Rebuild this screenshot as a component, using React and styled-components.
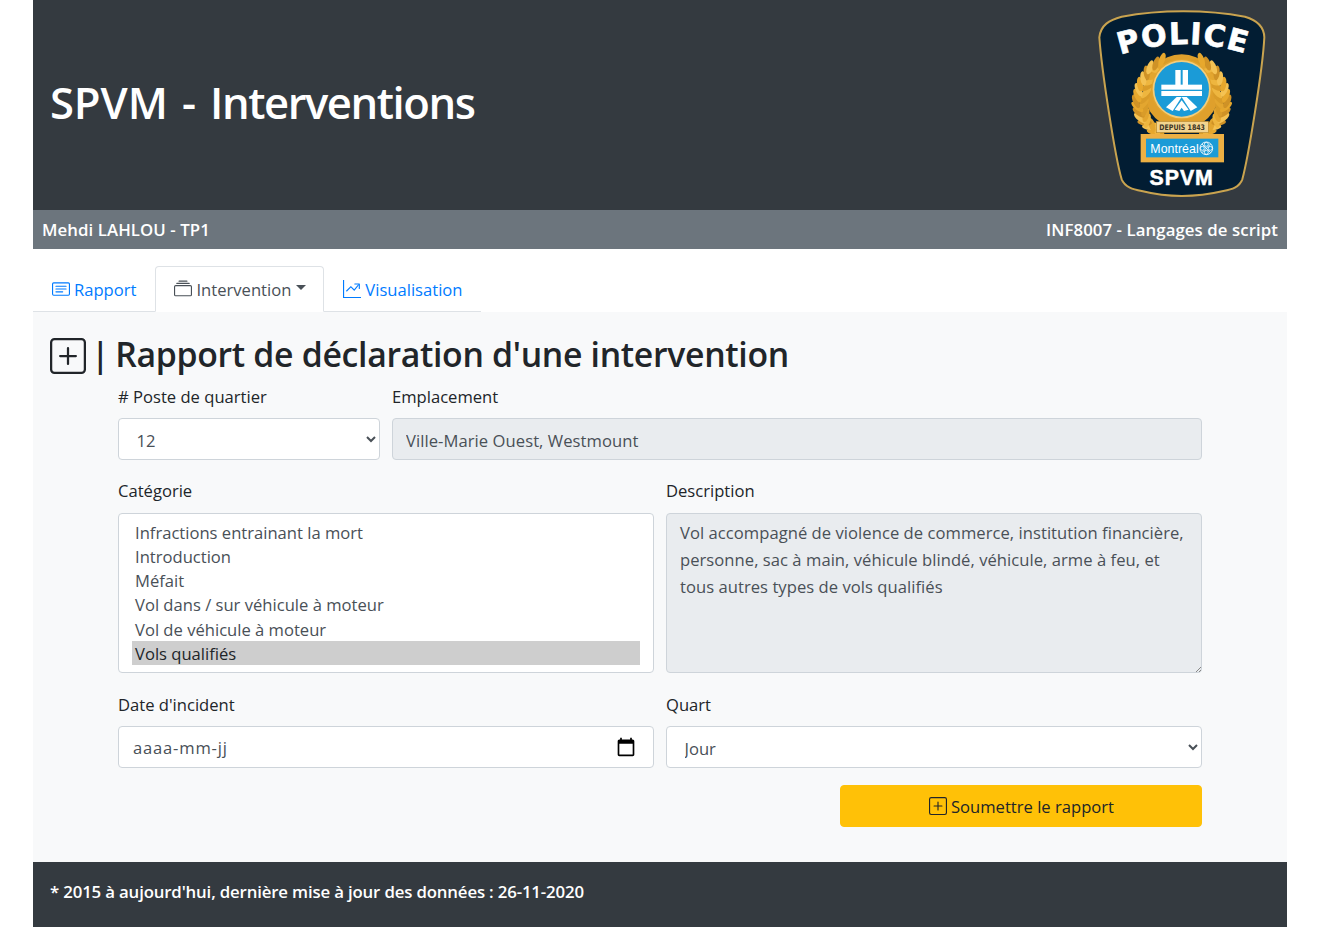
import React from "react";
import styled, { createGlobalStyle } from "styled-components";

const Global = createGlobalStyle`
  html, body { margin: 0; padding: 0; background: #fff; }
  body { font-family: "Open Sans", "Noto Sans", sans-serif; font-size: 16.6px; color: #212529; }
  * { box-sizing: border-box; }
`;

const Page = styled.div`width: 1254px; margin: 0 auto;`;
const Header = styled.header`
  height: 210px; background: #343a40; color: #fff;
  display: flex; align-items: center; justify-content: space-between; padding-left: 17px;
`;
const Title = styled.h1`
  margin: 0 0 6px; font-size: 43.6px; font-weight: 600; line-height: 1.2; word-spacing: 3px; letter-spacing: -0.1px;
`;
const TitleWord = styled.span`letter-spacing: -1.45px;`;
const SubBar = styled.div`
  height: 39px; background: #6c757d; color: #fff; display: flex; align-items: center;
  justify-content: space-between; padding: 0 9px; font-weight: 600; font-size: 16.8px; letter-spacing: 0.08px;
`;
const Tabs = styled.nav`
  display: flex; width: 448px; height: 63px; padding-top: 17px; border-bottom: 1px solid #dee2e6;
`;
const Tab = styled.a`
  display: flex; align-items: center; gap: 4px; height: 46px; margin-bottom: -1px;
  padding: ${p => (p.$active ? "0 17px 0 18px" : "0 18px")};
  color: ${p => (p.$active ? "#495057" : "#007bff")};
  background: ${p => (p.$active ? "#fff" : "transparent")};
  border: 1px solid ${p => (p.$active ? "#dee2e6" : "transparent")};
  border-bottom-color: ${p => (p.$active ? "#fff" : "transparent")};
  border-radius: 4px 4px 0 0;
`;
const Caret = styled.span`
  width: 0; height: 0; margin-left: 1px; margin-top: -3px;
  border-top: 5px solid #495057; border-left: 5.5px solid transparent; border-right: 5.5px solid transparent;
`;
const Main = styled.main`background: #f8f9fa; height: 550px; padding: 26px 17px 0;`;
const Heading = styled.h2`
  margin: 0; display: flex; align-items: center; height: 36px; font-size: 33.8px; font-weight: 600; line-height: 36px; letter-spacing: -0.32px;
`;
const HeadingBar = styled.span`margin: 0 6px 4px 5px;`;
const HeadingText = styled.span`margin-bottom: 4px;`;
const Form = styled.form`margin: 10.75px 0 0 68px; width: 1084px;`;
const Row = styled.div`
  display: grid; grid-template-columns: ${p => p.$cols || "1fr 1fr"}; column-gap: 12px; margin-bottom: ${p => p.$mb || "19.5px"};
`;
const Field = styled.div`display: flex; flex-direction: column; min-width: 0;`;
const Label = styled.label`display: block; height: 24px; line-height: 23px; margin-bottom: 9.5px; white-space: nowrap;`;
const controlBase = `
  width: 100%; height: 42px; border: 1px solid #ced4da; border-radius: 4px; color: #495057;
  font-family: inherit; font-size: inherit; outline: none;
`;
const Select = styled.select`${controlBase} background: #fff; padding: 2px 12px 0 13.5px;`;
const TextInput = styled.input`
  ${controlBase} background: ${p => (p.readOnly ? "#e9ecef" : "#fff")}; padding: 2px 13px 0; letter-spacing: 0.06px;
`;
const ListBox = styled.select`
  ${controlBase} height: 160px; background: #fff; padding: 6px 13px; overflow: hidden;
  option { padding: 1px 3px 0; height: 24.2px; line-height: 23.2px; min-height: 24.2px; }
  option:checked { background: #cecece linear-gradient(#cecece, #cecece); color: #212529; }
`;
const TextArea = styled.textarea`
  ${controlBase} height: 160px; background: #e9ecef; padding: 6.6px 13px; line-height: 26.6px; letter-spacing: 0.04px;
  resize: vertical; overflow: hidden; display: block;
  &::-webkit-resizer {
    background: linear-gradient(135deg, transparent 80%, #888 80%, #888 85%, transparent 85%, transparent 90%, #888 90%, #888 95%, transparent 95%);
  }
`;
const DateBox = styled.div`
  ${controlBase} background: #fff; display: flex; align-items: center; justify-content: space-between;
  padding: 0 17px 0 14px; letter-spacing: .8px;
`;
const Actions = styled.div`display: flex; justify-content: flex-end; margin-top: -2.5px;`;
const Submit = styled.button`
  width: 362px; height: 42px; background: #ffc107; border: 1px solid #ffc107; border-radius: 4px; padding: 0 0 0 1px;
  color: #212529; font-family: inherit; font-size: inherit; display: flex; align-items: center; justify-content: center; gap: 4px;
`;
const Footer = styled.footer`
  height: 65px; background: #343a40; color: #fff; display: flex; align-items: center; padding: 0 0 7px 17px;
  font-weight: 600; font-size: 16.8px; letter-spacing: -0.15px;
`;

const Bi = ({ size = 18, children }) => (
  <svg width={size} height={size} viewBox="0 0 16 16" fill="currentColor" style={{ flex: "none" }}>{children}</svg>
);
const PlusSquare = ({ size }) => (
  <Bi size={size}>
    <path fillRule="evenodd" d="M14 1a1 1 0 0 1 1 1v12a1 1 0 0 1-1 1H2a1 1 0 0 1-1-1V2a1 1 0 0 1 1-1h12zM2 0a2 2 0 0 0-2 2v12a2 2 0 0 0 2 2h12a2 2 0 0 0 2-2V2a2 2 0 0 0-2-2H2z" />
    <path d="M8 4a.5.5 0 0 1 .5.5v3h3a.5.5 0 0 1 0 1h-3v3a.5.5 0 0 1-1 0v-3h-3a.5.5 0 0 1 0-1h3v-3A.5.5 0 0 1 8 4z" />
  </Bi>
);
const CardText = () => (
  <Bi>
    <path fillRule="evenodd" d="M14.5 3a.5.5 0 0 1 .5.5v9a.5.5 0 0 1-.5.5h-13a.5.5 0 0 1-.5-.5v-9a.5.5 0 0 1 .5-.5h13zm-13-1A1.5 1.5 0 0 0 0 3.5v9A1.5 1.5 0 0 0 1.5 14h13a1.5 1.5 0 0 0 1.5-1.5v-9A1.5 1.5 0 0 0 14.5 2h-13z" />
    <path d="M3 5.5a.5.5 0 0 1 .5-.5h9a.5.5 0 0 1 0 1h-9a.5.5 0 0 1-.5-.5zM3 8a.5.5 0 0 1 .5-.5h9a.5.5 0 0 1 0 1h-9A.5.5 0 0 1 3 8zm0 2.5a.5.5 0 0 1 .5-.5h6a.5.5 0 0 1 0 1h-6a.5.5 0 0 1-.5-.5z" />
  </Bi>
);
const Collection = () => (
  <Bi>
    <path fillRule="evenodd" d="M2.5 3.5a.5.5 0 0 1 0-1h11a.5.5 0 0 1 0 1h-11zm2-2a.5.5 0 0 1 0-1h7a.5.5 0 0 1 0 1h-7zM0 13a1.5 1.5 0 0 0 1.5 1.5h13A1.5 1.5 0 0 0 16 13V6a1.5 1.5 0 0 0-1.5-1.5h-13A1.5 1.5 0 0 0 0 6v7zm1.5.5A.5.5 0 0 1 1 13V6a.5.5 0 0 1 .5-.5h13a.5.5 0 0 1 .5.5v7a.5.5 0 0 1-.5.5h-13z" />
  </Bi>
);
const GraphUp = () => (
  <Bi>
    <path d="M0 0h1v16H0V0zm1 15h15v1H1v-1z" />
    <path fillRule="evenodd" d="M14.39 4.312L10.041 9.75 7 6.707l-3.646 3.647-.708-.708L7 5.293 9.959 8.25l3.65-4.563.781.624z" />
    <path fillRule="evenodd" d="M10 3.5a.5.5 0 0 1 .5-.5h4a.5.5 0 0 1 .5.5v4a.5.5 0 0 1-1 0V4h-3.5a.5.5 0 0 1-.5-.5z" />
  </Bi>
);
const CalendarIcon = () => (
  <svg width="20" height="20" viewBox="0 0 24 24" fill="#000" style={{ flex: "none" }}>
    <path d="M20 3h-1V1h-2v2H7V1H5v2H4c-1.1 0-2 .9-2 2v16c0 1.1.9 2 2 2h16c1.1 0 2-.9 2-2V5c0-1.1-.9-2-2-2zm0 18H4V8h16v13z" />
  </svg>
);

/* Laurel wreath of the badge: leaves sampled along the left branch, mirrored for the right one. */
const branch = [[226, 392], [184, 352], [172, 302], [184, 250], [214, 200], [268, 166]];
const leaves = [];
branch.slice(0, -1).forEach(([x0, y0], i) => {
  const [x1, y1] = branch[i + 1];
  const tangent = (Math.atan2(y1 - y0, x1 - x0) * 180) / Math.PI;
  for (let s = 0; s < 3; s++) {
    const f = s / 3;
    const x = x0 + (x1 - x0) * f;
    const y = y0 + (y1 - y0) * f;
    leaves.push({ k: `i${i}${s}`, x: x + 18, y: y + 10, rot: tangent + 30, c: ["#d99c29", "#eeb63f", "#e3a62f"][(i + s) % 3] });
    leaves.push({ k: `o${i}${s}`, x: x - 4, y: y + 2, rot: tangent - 38, c: ["#e7a82d", "#f4c253", "#cf9226"][(i + s) % 3] });
  }
});
const Branch = ({ mirrored }) => (
  <g transform={mirrored ? "translate(610 0) scale(-1 1)" : undefined}>
    {leaves.map(l => (
      <ellipse key={l.k} cx={l.x} cy={l.y} rx="22" ry="9" fill={l.c} transform={`rotate(${l.rot} ${l.x} ${l.y})`} />
    ))}
  </g>
);

const Logo = () => (
  <svg width="207" height="210" viewBox="0 0 621 630" style={{ flex: "none" }}>
    <path d="M58 112 C62 75 88 60 125 50 C240 28 380 28 495 50 C530 60 552 78 553 112 C548 210 505 470 487 538 C478 562 455 568 430 573 C345 593 265 593 185 573 C160 568 135 562 125 538 C105 470 65 210 58 112 Z" fill="#021d33" stroke="#c9a34f" strokeWidth="6" />
    <path id="policeArc" d="M110 168 Q 310 98 510 165" fill="none" />
    <text fill="#fff" stroke="#fff" strokeWidth="2" fontFamily="'DejaVu Sans', sans-serif" fontWeight="700" fontSize="90" letterSpacing="4">
      <textPath href="#policeArc" startOffset="50%" textAnchor="middle">POLICE</textPath>
    </text>
    <circle cx="305" cy="275" r="112" fill="#dfa02c" />
    <Branch />
    <Branch mirrored />
    <circle cx="305" cy="268" r="91" fill="#e3a62f" />
    <circle cx="305" cy="268" r="87" fill="#f3cd7c" />
    <circle cx="305" cy="268" r="82" fill="#1b9bd7" />
    <g fill="#fff">
      <rect x="286" y="210" width="16" height="46" />
      <rect x="308" y="210" width="16" height="46" />
      <rect x="244" y="254" width="122" height="15" />
      <rect x="244" y="273" width="122" height="15" />
      <polygon points="290,291 305,291 278,333 258,322" />
      <polygon points="305,291 320,291 352,322 332,333" />
      <polygon points="305,301 326,329 312,333 305,323 298,333 284,329" />
    </g>
    <rect x="229" y="364" width="156" height="34" fill="#f2d48f" stroke="#b9872a" strokeWidth="2" />
    <text x="238" y="389" fill="#3a3325" fontFamily="'DejaVu Sans', sans-serif" fontWeight="700" fontSize="23" textLength="137" lengthAdjust="spacingAndGlyphs">DEPUIS 1843</text>
    <rect x="182" y="402" width="250" height="85" fill="#edb043" />
    <rect x="198" y="416" width="217" height="56" fill="#1b9bd7" />
    <text x="211" y="458" fill="#fff" fontFamily="'Liberation Sans', sans-serif" fontSize="37" textLength="145">Montréal</text>
    <g fill="none" stroke="#fff" strokeWidth="2.5">
      <circle cx="379" cy="445" r="19" />
      <circle cx="379" cy="433" r="6" /><circle cx="379" cy="457" r="6" />
      <circle cx="367" cy="445" r="6" /><circle cx="391" cy="445" r="6" />
      <path d="M366 432 L392 458 M392 432 L366 458" />
    </g>
    <text x="305" y="555" textAnchor="middle" fill="#fff" stroke="#fff" strokeWidth="1.5" fontFamily="'Liberation Sans', sans-serif" fontWeight="700" fontSize="64" letterSpacing="3">SPVM</text>
  </svg>
);

const categories = ["Infractions entrainant la mort", "Introduction", "Méfait", "Vol dans / sur véhicule à moteur", "Vol de véhicule à moteur", "Vols qualifiés"];

export default function App() {
  return (
    <Page>
      <Global />
      <Header>
        <Title>SPVM - <TitleWord>Interventions</TitleWord></Title>
        <Logo />
      </Header>
      <SubBar><span>Mehdi LAHLOU - TP1</span><span>INF8007 - Langages de script</span></SubBar>
      <Tabs>
        <Tab><CardText />Rapport</Tab>
        <Tab $active><Collection />Intervention<Caret /></Tab>
        <Tab><GraphUp />Visualisation</Tab>
      </Tabs>
      <Main>
        <Heading>
          <PlusSquare size={36} />
          <HeadingBar>|</HeadingBar>
          <HeadingText>Rapport de déclaration d'une intervention</HeadingText>
        </Heading>
        <Form>
          <Row $cols="262px 810px" $mb="19px">
            <Field>
              <Label># Poste de quartier</Label>
              <Select defaultValue="12"><option>12</option></Select>
            </Field>
            <Field>
              <Label>Emplacement</Label>
              <TextInput readOnly value="Ville-Marie Ouest, Westmount" />
            </Field>
          </Row>
          <Row $mb="20px">
            <Field>
              <Label>Catégorie</Label>
              <ListBox multiple size={6} defaultValue={["Vols qualifiés"]}>
                {categories.map(c => <option key={c}>{c}</option>)}
              </ListBox>
            </Field>
            <Field>
              <Label>Description</Label>
              <TextArea readOnly value="Vol accompagné de violence de commerce, institution financière, personne, sac à main, véhicule blindé, véhicule, arme à feu, et tous autres types de vols qualifiés" />
            </Field>
          </Row>
          <Row>
            <Field>
              <Label>Date d'incident</Label>
              <DateBox><span>aaaa-mm-jj</span><CalendarIcon /></DateBox>
            </Field>
            <Field>
              <Label>Quart</Label>
              <Select defaultValue="Jour"><option>Jour</option></Select>
            </Field>
          </Row>
          <Actions>
            <Submit type="button"><PlusSquare size={18} />Soumettre le rapport</Submit>
          </Actions>
        </Form>
      </Main>
      <Footer>* 2015 à aujourd'hui, dernière mise à jour des données : 26-11-2020</Footer>
    </Page>
  );
}
